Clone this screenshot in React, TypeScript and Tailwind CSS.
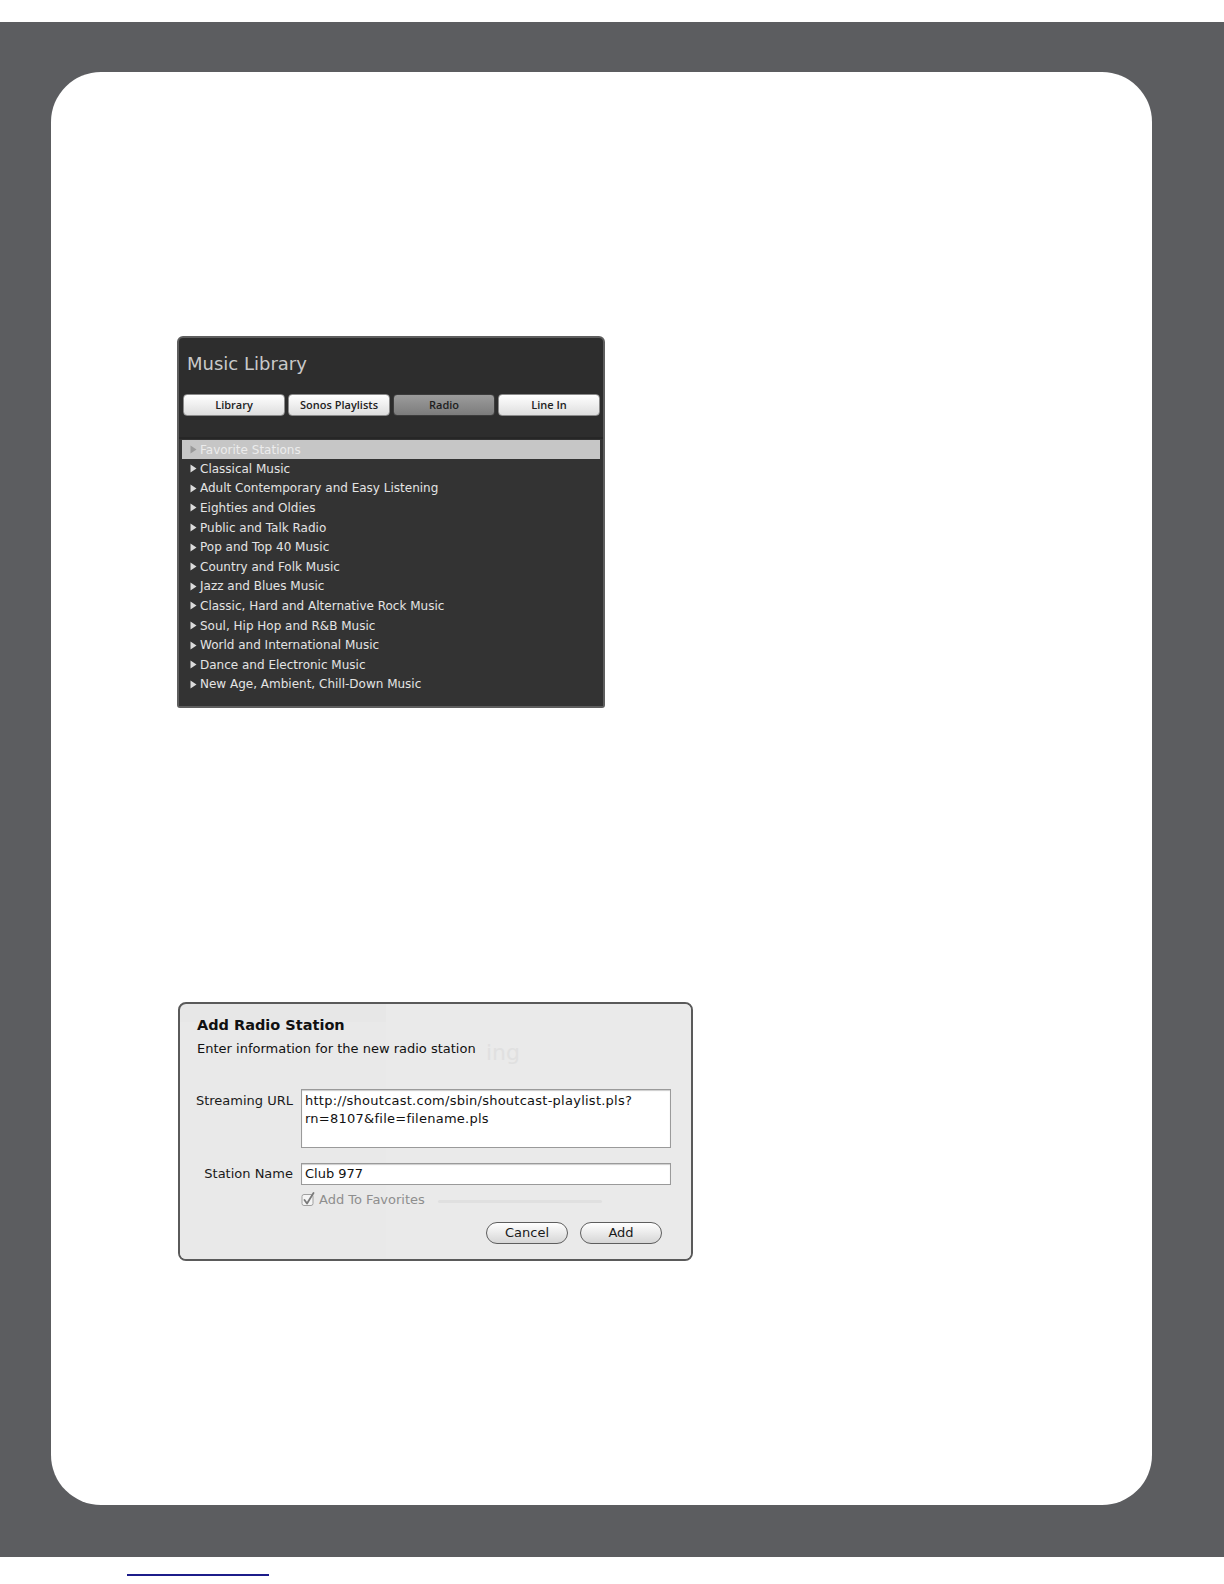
import React from 'react';

const stations = [
  'Classical Music',
  'Adult Contemporary and Easy Listening',
  'Eighties and Oldies',
  'Public and Talk Radio',
  'Pop and Top 40 Music',
  'Country and Folk Music',
  'Jazz and Blues Music',
  'Classic, Hard and Alternative Rock Music',
  'Soul, Hip Hop and R&B Music',
  'World and International Music',
  'Dance and Electronic Music',
  'New Age, Ambient, Chill-Down Music',
];

const tabs = ['Library', 'Sonos Playlists', 'Radio', 'Line In'];

const Arrow: React.FC<{ color: string }> = ({ color }) => (
  <svg width="7" height="9" viewBox="0 0 7 9" className="shrink-0">
    <polygon points="0.5,0.5 6.5,4.5 0.5,8.5" fill={color} />
  </svg>
);

const MusicLibrary: React.FC = () => (
  <div className="w-[428px] h-[372px] rounded-t-[6px] rounded-b-[3px] border-2 border-[#5e5e5e] bg-[#2d2d2d] flex flex-col overflow-hidden">
    {/* Header */}
    <div className="h-[56px] pl-[8px] pt-[14px] text-[18px] leading-[24px] text-[#c9c9c9]">Music Library</div>

    {/* Tab row */}
    <div className="flex gap-[3px] pl-[4px] pr-[3px] font-['Open_Sans',sans-serif]">
      {tabs.map((t) =>
        t === 'Radio' ? (
          <div
            key={t}
            className="w-[102px] h-[22px] rounded-[4px] border border-[#3c3c3c] bg-gradient-to-b from-[#9c9c9c] to-[#7c7c7c] flex items-center justify-center text-[11px] font-semibold text-[#1e1e1e]"
          >
            {t}
          </div>
        ) : (
          <div
            key={t}
            className="w-[102px] h-[22px] rounded-[4px] border border-[#8a8a8a] bg-gradient-to-b from-[#ffffff] to-[#dedede] flex items-center justify-center text-[11px] font-semibold text-[#222]"
          >
            {t}
          </div>
        )
      )}
    </div>

    {/* List */}
    <div className="mt-[21px] flex-1 border-t-2 border-[#262626] bg-[#333333] pt-[1px]">
      <div className="h-[19px] mx-[3px] bg-[#c6c6c6] flex items-center gap-[3px] pl-[8px] text-[12px] text-[#ececec]">
        <Arrow color="#9a9a9a" />
        <span>Favorite Stations</span>
      </div>
      {stations.map((s) => (
        <div key={s} className="h-[19.6px] flex items-center gap-[3px] pl-[11px] text-[12px] text-[#e4e4e4]">
          <Arrow color="#dcdcdc" />
          <span>{s}</span>
        </div>
      ))}
    </div>
  </div>
);

const AddStation: React.FC = () => (
  <div className="relative w-[515px] h-[259px] rounded-[8px] border-2 border-[#5a5a5a] bg-[#e7e7e7] overflow-hidden">
    {/* faint ghosted background of the window behind */}
    <div className="absolute left-0 top-[18px] w-[206px] h-[240px] bg-[#e9e9e9]" />
    <div className="absolute left-[206px] top-0 w-[309px] h-[259px] bg-[#eaeaea]" />
    <div className="absolute left-[306px] top-[32px] text-[22px] text-[#e0e0e0]">ing</div>
    <div className="absolute left-[258px] top-[196px] w-[164px] h-[3px] bg-[#e0e0e0] rounded" />

    <div className="relative pl-[17px] pt-[10px]">
      <div className="text-[14.5px] font-bold leading-[22px] text-[#111]">Add Radio Station</div>
      <div className="mt-[4px] text-[13px] leading-[18px] text-[#111]">Enter information for the new radio station</div>
    </div>

    <div className="relative mt-[31px] grid grid-cols-[113px_370px] gap-x-[8px]">
      <div className="pt-[3px] text-right text-[13px] leading-[18px] text-[#1a1a1a]">Streaming URL</div>
      <div className="h-[59px] border border-[#9a9a9a] bg-white px-[3px] pt-[2px] text-[13px] leading-[18px] tracking-[0.25px] text-[#111] shadow-[inset_0_1px_1px_rgba(0,0,0,0.2)]">
        http://shoutcast.com/sbin/shoutcast-playlist.pls?
        <br />
        rn=8107&amp;file=filename.pls
      </div>

      <div className="mt-[15px] flex items-center justify-end text-[13px] text-[#1a1a1a]">Station Name</div>
      <div className="mt-[15px] h-[22px] border border-[#9a9a9a] bg-white px-[3px] flex items-center text-[13px] text-[#111] shadow-[inset_0_1px_1px_rgba(0,0,0,0.2)]">
        Club 977
      </div>

      <div />
      <div className="mt-[5px] flex items-center gap-[3px] text-[13px] text-[#8e8e8e]">
        <svg width="15" height="15" viewBox="0 0 15 15" className="shrink-0">
          <rect x="1" y="2.5" width="11" height="11" rx="2" fill="#f4f4f4" stroke="#a0a0a0" />
          <path d="M3.5 8 L6 11.5 L12.5 1" fill="none" stroke="#7a7a7a" strokeWidth="1.8" strokeLinecap="round" strokeLinejoin="round" />
        </svg>
        <span>Add To Favorites</span>
      </div>
    </div>

    <div className="relative mt-[12px] flex justify-end gap-[12px] pr-[29px]">
      {['Cancel', 'Add'].map((b) => (
        <div
          key={b}
          className="w-[82px] h-[22px] rounded-full border border-[#5e5e5e] bg-gradient-to-b from-[#ffffff] to-[#d6d6d6] flex items-center justify-center text-[13px] text-[#1a1a1a]"
        >
          {b}
        </div>
      ))}
    </div>
  </div>
);

export default function App() {
  return (
    <div className="w-full h-[1584px] bg-white font-['DejaVu_Sans',sans-serif]">
      <div className="pt-[22px]">
        <div className="h-[1535px] bg-[#5c5d60] pl-[51px] pr-[72px] pt-[50px]">
          <div className="h-[1433px] rounded-[50px] bg-white pl-[126px] pt-[264px]">
            <MusicLibrary />
            <div className="mt-[294px] ml-[1px]">
              <AddStation />
            </div>
          </div>
        </div>
      </div>
      <div className="mt-[17px] ml-[127px] w-[142px] h-[2px] bg-[#1c1c8a]" />
    </div>
  );
}
